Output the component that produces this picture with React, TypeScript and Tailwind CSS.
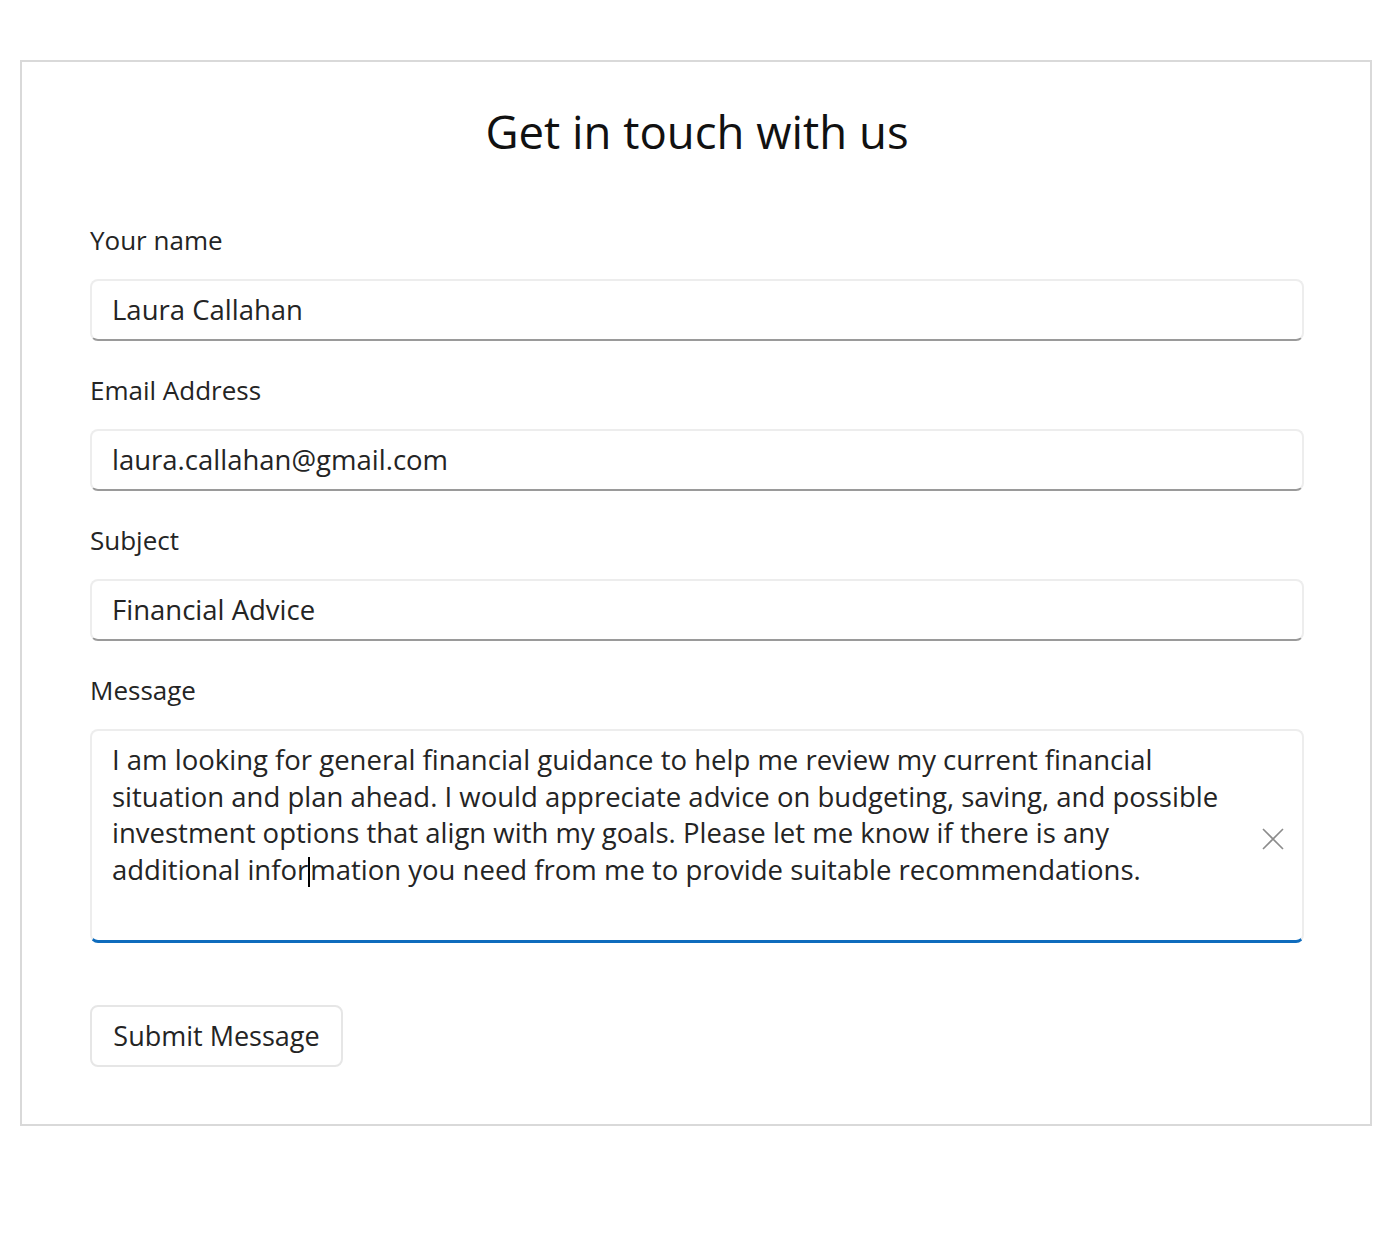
import React from "react";

const font = { fontFamily: '"Open Sans", "Noto Sans", sans-serif' };

function Field({ label, value }: { label: string; value: string }) {
  return (
    <div className="flex flex-col">
      <div className="h-[36px] leading-[36px] text-[26px] text-[#242424]">{label}</div>
      <div className="mt-[21px] h-[62px] rounded-[8px] border-2 border-[#ededed] border-b-[#9a9a9a] flex items-center px-[20px] text-[27.5px] text-[#242424]">
        {value}
      </div>
    </div>
  );
}

export default function App() {
  return (
    <div style={font} className="w-[1392px] h-[1246px] bg-white pt-[60px] pl-[20px]">
      <div className="w-[1352px] h-[1066px] border-2 border-[#d9d9d9] flex flex-col pl-[68px] pr-[66px]">
        <h1 className="mt-[39px] h-[60px] leading-[60px] text-center text-[45.5px] text-[#111111]">
          Get in touch with us
        </h1>
        <div className="mt-[61px] flex flex-col gap-[31px]">
          <Field label="Your name" value="Laura Callahan" />
          <Field label="Email Address" value="laura.callahan@gmail.com" />
          <Field label="Subject" value="Financial Advice" />
          <div className="flex flex-col">
            <div className="h-[36px] leading-[36px] text-[26px] text-[#242424]">Message</div>
            <div className="mt-[21px] h-[214px] rounded-[8px] border-2 border-[#ededed] border-b-[3px] border-b-[#0f6cbd] flex items-start pl-[20px] pr-[18px] pt-[11px]">
              <div className="flex-1 text-[27.5px] leading-[36.7px] text-[#242424] whitespace-nowrap">
                <div>I am looking for general financial guidance to help me review my current financial</div>
                <div>situation and plan ahead. I would appreciate advice on budgeting, saving, and possible</div>
                <div>investment options that align with my goals. Please let me know if there is any</div>
                <div>
                  additional infor
                  <span className="inline-block w-[2px] h-[30px] bg-black align-[-7px]"></span>
                  mation you need from me to provide suitable recommendations.
                </div>
              </div>
              <div className="self-center mb-[4px]">
                <svg width="22" height="22" viewBox="0 0 22 22" fill="none">
                  <path d="M1 1 L21 21 M21 1 L1 21" stroke="#8c8c8c" strokeWidth="1.6" />
                </svg>
              </div>
            </div>
          </div>
        </div>
        <div className="mt-[62px]">
          <button className="h-[62px] w-[253px] rounded-[8px] border-2 border-[#e6e6e6] bg-white text-[27px] text-[#242424]">
            Submit Message
          </button>
        </div>
      </div>
    </div>
  );
}
